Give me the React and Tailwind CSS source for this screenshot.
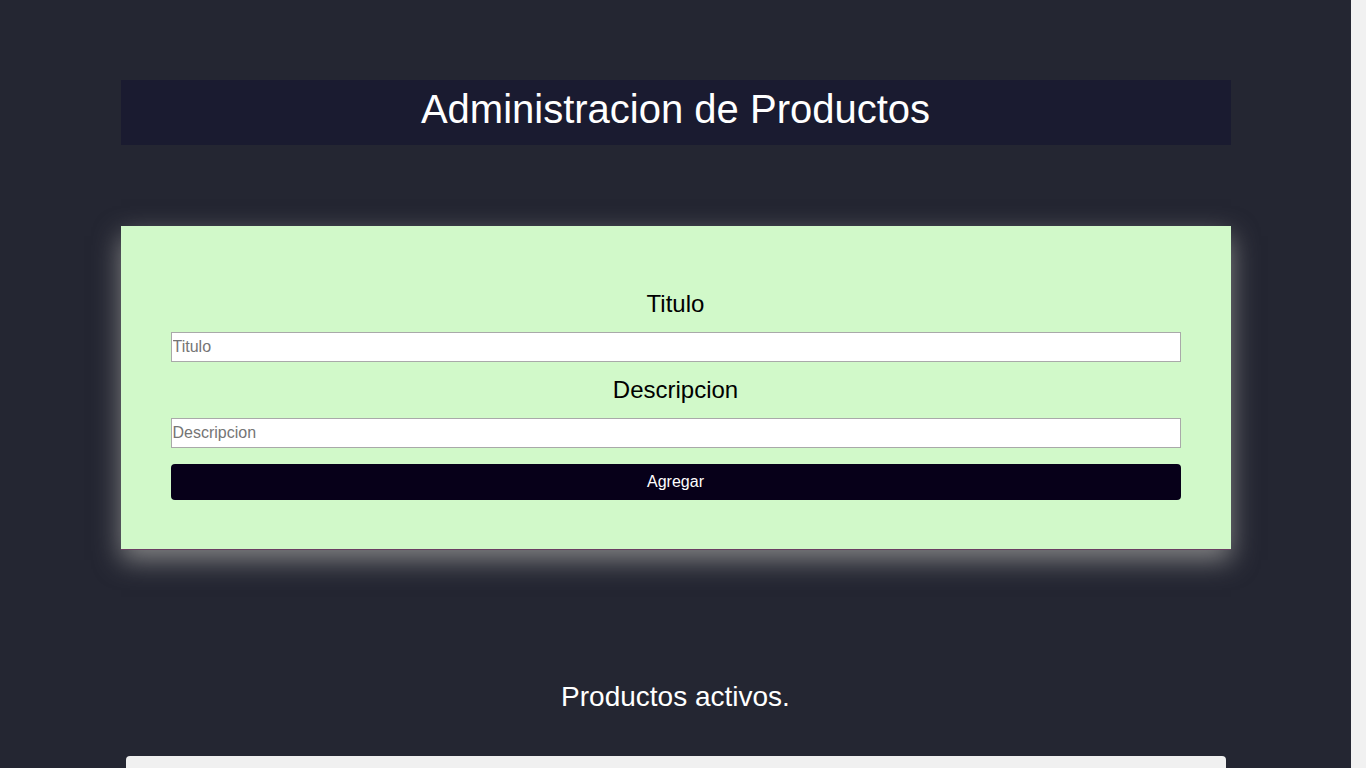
export default function App() {
  return (
    <div
      className="min-h-screen border-r-[15px] border-[#f1f1f1] bg-[#242632]"
      style={{ fontFamily: '"Liberation Sans", Arial, sans-serif' }}
    >
      <div className="mx-auto w-[1110px] pt-[80px] pb-[40px]">
        <header className="h-[65px] bg-[#1a1b30] pt-[6px] text-center">
          <h1 className="text-[40px] leading-[46px] text-white">Administracion de Productos</h1>
        </header>

        <form className="mt-[81px] border-b border-[#6a3f62] bg-[#d1f9c9] px-[50px] pt-[64px] pb-[49px] shadow-[0_10px_25px_rgba(140,140,140,0.9)]">
          <label htmlFor="titulo" className="block text-center text-[24px] leading-[28px] text-black">
            Titulo
          </label>
          <input
            id="titulo"
            type="text"
            placeholder="Titulo"
            className="mt-[14px] block h-[30px] w-full border border-[#a9a9a9] bg-white px-[1px] text-[16px] text-black placeholder:text-[#757575] outline-none"
          />
          <label htmlFor="descripcion" className="mt-[14px] block text-center text-[24px] leading-[28px] text-black">
            Descripcion
          </label>
          <input
            id="descripcion"
            type="text"
            placeholder="Descripcion"
            className="mt-[14px] block h-[30px] w-full border border-[#a9a9a9] bg-white px-[1px] text-[16px] text-black placeholder:text-[#757575] outline-none"
          />
          <button
            type="submit"
            className="mt-[16px] block h-[36px] w-full rounded-[4px] bg-[#070019] text-[16px] text-white"
          >
            Agregar
          </button>
        </form>

        <h2 className="mt-[131px] text-center text-[28px] leading-[32px] text-white">Productos activos.</h2>

        <div className="mx-auto mt-[43px] h-[300px] w-[1100px] rounded-[4px] bg-[#f0f0f0]"></div>
      </div>
    </div>
  );
}
